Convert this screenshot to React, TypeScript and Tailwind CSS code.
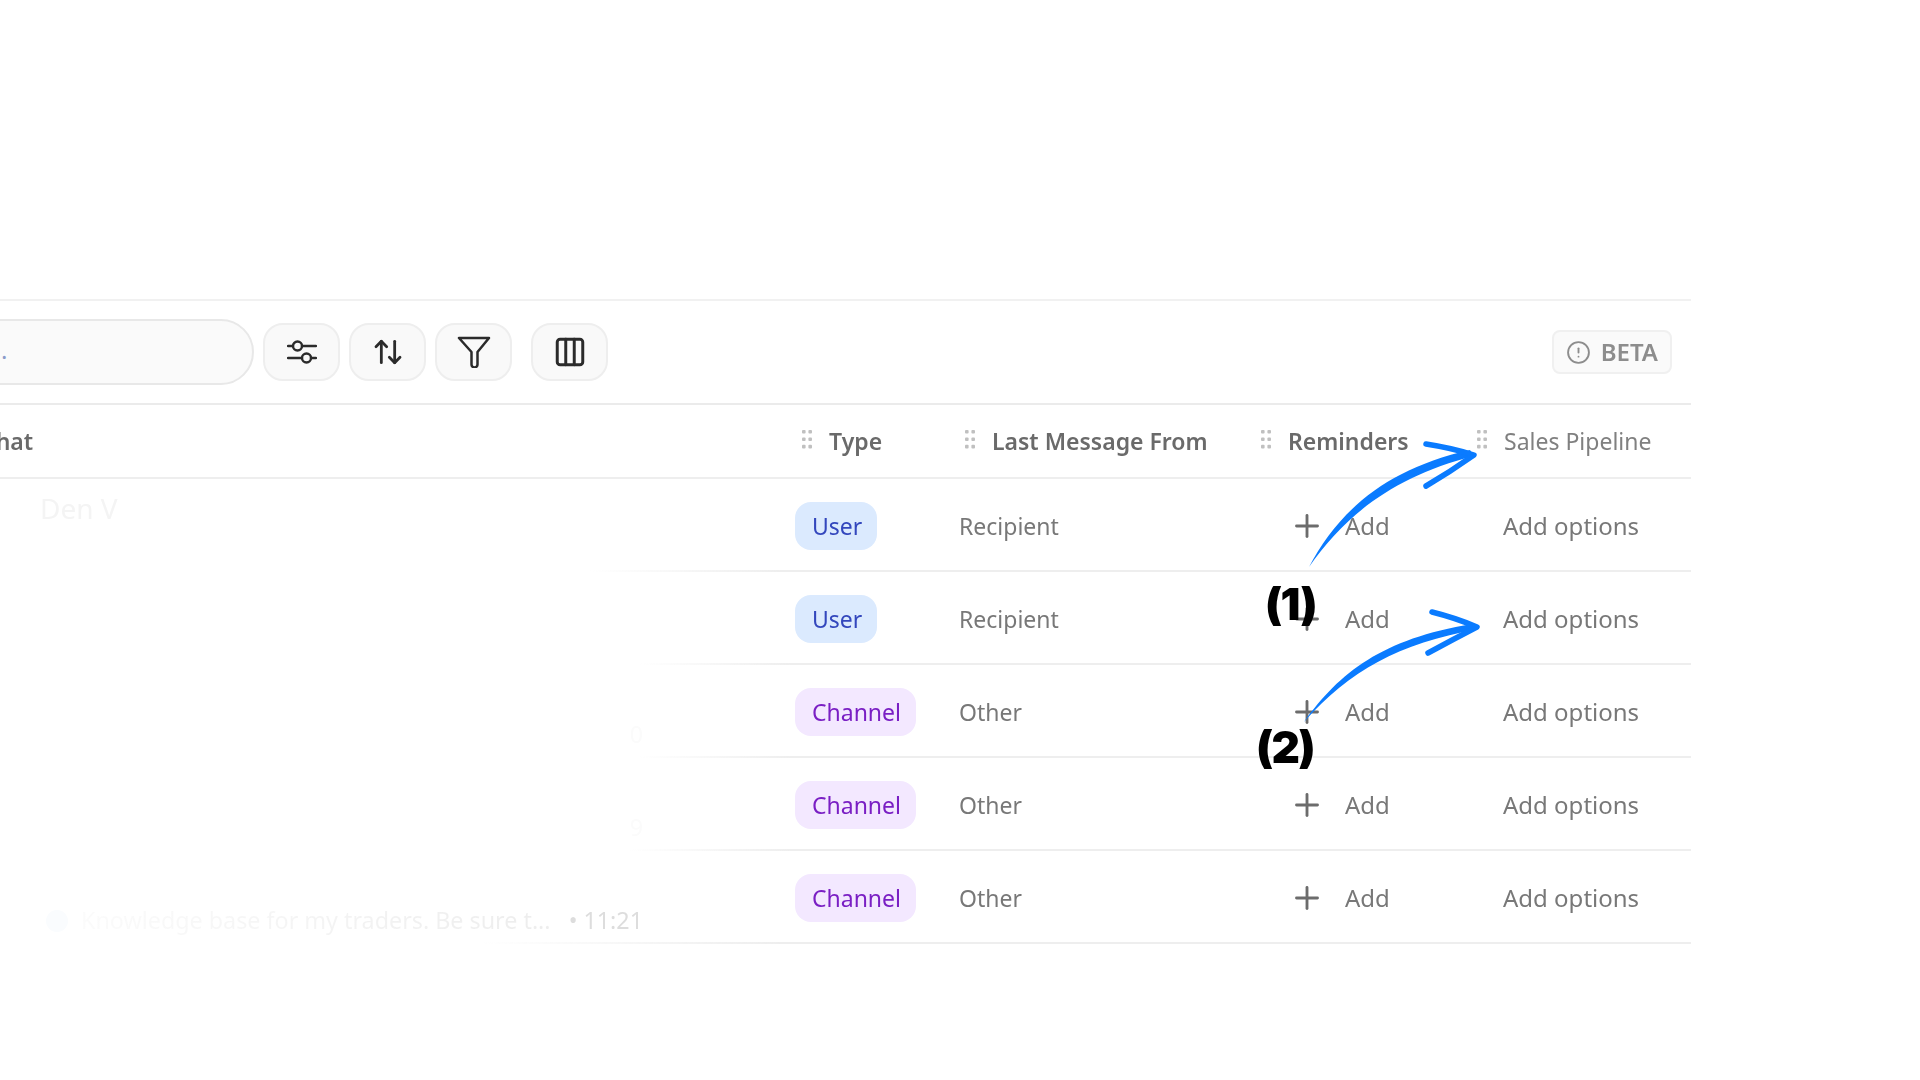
import { ArrowUpDown, CircleAlert, Columns3, Plus } from "lucide-react";

const COLS = "grid grid-cols-[795px_164px_295px_216px_221px]";

interface RowData {
  type: "User" | "Channel";
  from: string;
  name?: string;
  tail?: string;
  message?: string;
  line: string;
}

const rows: RowData[] = [
  { type: "User", from: "Recipient", name: "Den V", line: "from-transparent from-[590px] to-[#eeeeee] to-[780px]" },
  { type: "User", from: "Recipient", line: "from-transparent from-[640px] to-[#eeeeee] to-[790px]" },
  { type: "Channel", from: "Other", tail: "0", line: "from-transparent from-[640px] to-[#eeeeee] to-[790px]" },
  { type: "Channel", from: "Other", tail: "9", line: "from-transparent from-[630px] to-[#eeeeee] to-[790px]" },
  {
    type: "Channel",
    from: "Other",
    message: "Knowledge base for my traders. Be sure t...",
    line: "from-transparent from-[480px] to-[#eeeeee] to-[780px]",
  },
];

function Grip() {
  return (
    <svg width="10" height="19" viewBox="0 0 10 19" className="shrink-0 -mt-1 fill-[#c0c0c0]">
      <rect x="0" y="0" width="3.6" height="3.6" rx="1" />
      <rect x="6.4" y="0" width="3.6" height="3.6" rx="1" />
      <rect x="0" y="7.4" width="3.6" height="3.6" rx="1" />
      <rect x="6.4" y="7.4" width="3.6" height="3.6" rx="1" />
      <rect x="0" y="14.8" width="3.6" height="3.6" rx="1" />
      <rect x="6.4" y="14.8" width="3.6" height="3.6" rx="1" />
    </svg>
  );
}

function HeaderCell({ label, muted }: { label: string; muted?: boolean }) {
  return (
    <div className="flex items-center gap-[17px] pl-[7px] text-[23px]">
      <Grip />
      <span className={muted ? "font-normal text-[#808080]" : "font-semibold text-[#6a6a6a]"}>{label}</span>
    </div>
  );
}

function ToolButton({ children }: { children: React.ReactNode }) {
  return (
    <button className="flex h-[58px] w-[77px] items-center justify-center rounded-[20px] border-2 border-[#eeeeee] bg-[#f9f9f9] text-[#2b2b2b]">
      {children}
    </button>
  );
}

function Row({ row }: { row: RowData }) {
  const channel = row.type === "Channel";
  return (
    <div>
      <div className={`${COLS} h-[91px] items-center`}>
        <div className="flex h-full flex-col pt-[14px] pr-[152px] pl-[40px] text-[23.3px]">
          <div className="-mt-[3px] h-[40px] text-[28px] leading-[37px] text-[#f4f4f4]">{row.name}</div>
          <div className="flex h-[37px] items-center justify-end whitespace-nowrap leading-[37px]">
            {row.message && (
              <>
                <span className="mr-[13px] h-[22px] w-[22px] shrink-0 rounded-full bg-[#fafcfe]" />
                <span className="bg-gradient-to-r from-[#fbfbfb] to-[#ededed] bg-clip-text text-transparent">
                  {row.message}
                </span>
                <span className="ml-[18px] text-[#dddddd]">• 11:21</span>
              </>
            )}
            {row.tail && <span className="text-[#fbfbfb]">{row.tail}</span>}
          </div>
        </div>
        <div className="pt-[2px]">
          <span
            className={
              channel
                ? "inline-flex h-[48px] items-center rounded-[16px] bg-[#f3e8ff] pr-[15px] pl-[17px] text-[23px] text-[#7a1fc4]"
                : "inline-flex h-[48px] items-center rounded-[16px] bg-[#dbeafe] pr-[15px] pl-[17px] text-[23px] text-[#3347bd]"
            }
          >
            <span className="pt-[2px]">{row.type}</span>
          </span>
        </div>
        <div className="pt-[4px] text-[23px] text-[#787878]">{row.from}</div>
        <div className="flex items-center gap-[26px] pt-[2px] pl-[41px] text-[#787878]">
          <Plus size={36} strokeWidth={1.9} className="-mx-[6px] shrink-0 text-[#6c6c6c]" />
          <span>Add</span>
        </div>
        <div className="pt-[2px] pl-[33px] text-[#787878]">Add options</div>
      </div>
      <div className={`h-[2px] bg-gradient-to-r ${row.line}`} />
    </div>
  );
}

export default function App() {
  return (
    <div className="relative h-screen w-full overflow-hidden bg-white font-['Noto_Sans',sans-serif] text-[24px]">
      <div className="w-[1691px] overflow-hidden pt-[299px] blur-[0.5px]">
        <div className="flex h-[106px] items-center gap-[9px] border-y-2 border-y-[#f1f1f1] border-b-[#ebebeb] pr-[19px]">
          <div className="-ml-[60px] flex h-[66px] w-[314px] items-center rounded-full border-2 border-[#e8e8e8] bg-[#fafafa] pl-[59px] text-[#8a9bc9]">
            <span className="-mt-1">.</span>
          </div>
          <ToolButton>
            <svg width="30" height="26" viewBox="0 0 30 26" fill="none" stroke="currentColor" strokeWidth="2.4">
              <path d="M1 7h5M15 7h14M1 19h14M24 19h5" strokeLinecap="round" />
              <circle cx="10.5" cy="7" r="4.5" />
              <circle cx="19.5" cy="19" r="4.5" />
            </svg>
          </ToolButton>
          <ToolButton>
            <ArrowUpDown size={32} strokeWidth={2.1} />
          </ToolButton>
          <ToolButton>
            <svg width="34" height="32" viewBox="0 0 34 32" fill="none" stroke="currentColor" strokeWidth="2.5" strokeLinejoin="round">
              <path d="M2 2h30L20.5 16v12.5a3 3 0 0 1-6 0V16z" />
            </svg>
          </ToolButton>
          <div className="ml-[10px]">
            <ToolButton>
              <Columns3 size={34} strokeWidth={2.1} />
            </ToolButton>
          </div>
          <div className="ml-auto flex h-[44px] items-center gap-[10px] rounded-[8px] border-2 border-[#f0f0f0] bg-[#fafafa] px-[12px] font-semibold text-[#8d8d8d]">
            <CircleAlert size={25} strokeWidth={1.8} className="shrink-0" />
            <span>BETA</span>
          </div>
        </div>

        <div className={`${COLS} h-[74px] items-center border-b-2 border-b-[#eeeeee]`}>
          <div className="-ml-[5px] w-[40px] overflow-hidden text-[23px] font-semibold text-[#6a6a6a]">
            <span className="-ml-[14px] block">Chat</span>
          </div>
          <HeaderCell label="Type" />
          <div className="-ml-[1px]">
            <HeaderCell label="Last Message From" />
          </div>
          <HeaderCell label="Reminders" />
          <HeaderCell label="Sales Pipeline" muted />
        </div>

        {rows.map((row, i) => (
          <Row key={i} row={row} />
        ))}
      </div>

      {/* hand drawn annotations over the table */}
      <svg className="absolute inset-0" width="1920" height="1080" viewBox="0 0 1920 1080" fill="none">
        <path d="M1309 567C1338 512 1385 469 1470 450L1474 456C1395 476 1346 514 1309 567Z" fill="#0a7bff" />
        <path d="M1426 444Q1452 448 1474 455Q1450 472 1426 486" stroke="#0a7bff" strokeWidth="5.5" strokeLinecap="round" strokeLinejoin="round" />
        <path d="M1304 722C1340 672 1382 639 1472 624L1478 629C1398 644 1350 670 1304 722Z" fill="#0a7bff" />
        <path d="M1432 612Q1456 618 1477 627Q1452 640 1428 653" stroke="#0a7bff" strokeWidth="5.5" strokeLinecap="round" strokeLinejoin="round" />
      </svg>
      <div className="absolute top-[571px] left-[1265px] font-['Inter',sans-serif] text-[44px] font-black tracking-[-1.5px] text-black">(1)</div>
      <div className="absolute top-[714px] left-[1256px] font-['Inter',sans-serif] text-[44px] font-black tracking-[-1.5px] text-black">(2)</div>
    </div>
  );
}
